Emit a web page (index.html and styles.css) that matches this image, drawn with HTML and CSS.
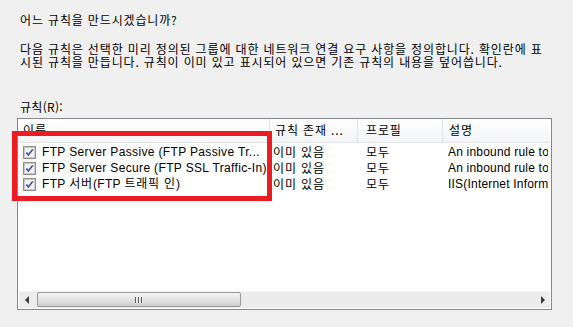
FILE: index.html
```html
<!DOCTYPE html>
<html lang="ko">
<head>
<meta charset="utf-8">
<link rel="stylesheet" href="styles.css">
</head>
<body>
<div class="page">
  <div class="title">어느 규칙을 만드시겠습니까?</div>
  <div class="desc">
    <div class="line">다음 규칙은 선택한 미리 정의된 그룹에 대한 네트워크 연결 요구 사항을 정의합니다. 확인란에 표</div>
    <div class="line">시된 규칙을 만듭니다. 규칙이 이미 있고 표시되어 있으면 기존 규칙의 내용을 덮어씁니다.</div>
  </div>
  <div class="label">규칙(R):</div>
  <div class="list">
    <div class="header">
      <div class="col c-name">이름</div>
      <div class="col c-exist">규칙 존재 ...</div>
      <div class="col c-prof">프로필</div>
      <div class="col c-desc">설명</div>
    </div>
    <div class="rows">
      <div class="row">
        <div class="cell c-name"><span class="cb"><svg width="13" height="13" viewBox="0 0 13 13"><rect x="0.5" y="0.5" width="12" height="12" fill="#dcdcdc" stroke="#8e8f8f"/><rect x="1.5" y="1.5" width="10" height="10" fill="#f4f4f4" stroke="#c8c8c8"/><path d="M3.3 6.6 L5.4 8.9 L9.8 3.2" fill="none" stroke="#3a53a4" stroke-width="1.6"/></svg></span><span class="txt">FTP Server Passive (FTP Passive Tr...</span></div>
        <div class="cell c-exist">이미 있음</div>
        <div class="cell c-prof">모두</div>
        <div class="cell c-desc">An inbound rule to allow</div>
      </div>
      <div class="row">
        <div class="cell c-name"><span class="cb"><svg width="13" height="13" viewBox="0 0 13 13"><rect x="0.5" y="0.5" width="12" height="12" fill="#dcdcdc" stroke="#8e8f8f"/><rect x="1.5" y="1.5" width="10" height="10" fill="#f4f4f4" stroke="#c8c8c8"/><path d="M3.3 6.6 L5.4 8.9 L9.8 3.2" fill="none" stroke="#3a53a4" stroke-width="1.6"/></svg></span><span class="txt">FTP Server Secure (FTP SSL Traffic-In)</span></div>
        <div class="cell c-exist">이미 있음</div>
        <div class="cell c-prof">모두</div>
        <div class="cell c-desc">An inbound rule to allow</div>
      </div>
      <div class="row">
        <div class="cell c-name"><span class="cb"><svg width="13" height="13" viewBox="0 0 13 13"><rect x="0.5" y="0.5" width="12" height="12" fill="#dcdcdc" stroke="#8e8f8f"/><rect x="1.5" y="1.5" width="10" height="10" fill="#f4f4f4" stroke="#c8c8c8"/><path d="M3.3 6.6 L5.4 8.9 L9.8 3.2" fill="none" stroke="#3a53a4" stroke-width="1.6"/></svg></span><span class="txt">FTP <span class="ko">서버</span>(FTP <span class="ko">트래픽 인</span>)</span></div>
        <div class="cell c-exist">이미 있음</div>
        <div class="cell c-prof">모두</div>
        <div class="cell c-desc">IIS(Internet Information Services)</div>
      </div>
    </div>
    <div class="hscroll">
      <div class="arrow"><svg width="5" height="8" viewBox="0 0 5 8"><path d="M4 0 L0 4 L4 8 Z" fill="#3c3c3c"/></svg></div>
      <div class="track">
        <div class="thumb"><span class="grip"></span><span class="grip"></span><span class="grip"></span></div>
      </div>
      <div class="arrow"><svg width="5" height="8" viewBox="0 0 5 8"><path d="M1 0 L5 4 L1 8 Z" fill="#3c3c3c"/></svg></div>
    </div>
    <div class="highlight"></div>
  </div>
</div>
</body>
</html>
```
FILE: styles.css
```css
html, body {
  margin: 0;
  padding: 0;
  background: #f0f0f0;
}
body {
  width: 573px;
  height: 327px;
  overflow: hidden;
  font-family: "Noto Sans CJK KR", "Liberation Sans", sans-serif;
  font-size: 12px;
  letter-spacing: 0.85px;
  color: #000;
}
.page {
  padding: 12px 21px 0 17px;
}
.title {
  margin-left: 3px;
  line-height: 16px;
  white-space: nowrap;
}
.desc {
  margin: 14px 0 0 3px;
}
.line {
  line-height: 13px;
  white-space: nowrap;
}
.label {
  margin: 32px 0 0 3px;
  line-height: 14px;
  letter-spacing: 0.3px;
}
.list {
  position: relative;
  margin-top: 4px;
  width: 533px;
  height: 190px;
  border: 1px solid #828790;
  background: #fff;
  display: flex;
  flex-direction: column;
}
.header {
  display: flex;
  height: 23px;
  border-bottom: 1px solid #e2e3e5;
  background: linear-gradient(#ffffff, #f3f4f6);
  margin-right: 1px;
}
.col {
  line-height: 22px;
  border-right: 1px solid #e2e3e5;
  box-sizing: border-box;
  white-space: nowrap;
  overflow: hidden;
}
.col.c-desc { border-right: none; flex: 1; }
.c-name { width: 252px; padding-left: 5px; box-sizing: border-box; }
.c-exist { width: 88px; padding-left: 5px; box-sizing: border-box; }
.c-prof { width: 85px; padding-left: 8px; box-sizing: border-box; }
.c-desc { flex: 1; padding-left: 6px; box-sizing: border-box; }
.rows {
  flex: 1;
  padding-top: 1px;
}
.row {
  display: flex;
  height: 16px;
  line-height: 16px;
  font-size: 12px;
}
.cell {
  white-space: nowrap;
  overflow: hidden;
}
.cell.c-name {
  padding-left: 5px;
  display: flex;
  align-items: center;
  font-family: "Liberation Sans", "Noto Sans CJK KR", sans-serif;
  font-size: 12px;
  letter-spacing: 0.35px;
}
.ko { letter-spacing: 0.8px; }
.cell.c-exist { padding-left: 3px; }
.cell.c-prof { padding-left: 8px; }
.cell.c-desc {
  padding-left: 5px;
  font-family: "Liberation Sans", sans-serif;
  font-size: 12px;
  letter-spacing: 0.2px;
  margin-right: 3px;
}
.cb {
  display: inline-flex;
  width: 13px;
  height: 13px;
  margin-right: 6px;
}
.hscroll {
  display: flex;
  height: 16px;
  background: #ececec;
  margin: 0 1px 1px 1px;
  border-top: 1px solid #f4f4f4;
}
.arrow {
  width: 16px;
  display: flex;
  align-items: center;
  justify-content: center;
}
.track {
  flex: 1;
  display: flex;
  padding-left: 2px;
}
.thumb {
  width: 204px;
  height: 15px;
  box-sizing: border-box;
  border: 1px solid #989898;
  border-radius: 2px;
  background: linear-gradient(#f4f4f4, #e3e3e3 50%, #d0d0d0);
  display: flex;
  align-items: center;
  justify-content: center;
  gap: 1px;
}
.grip {
  width: 1px;
  height: 6px;
  background: #5d5d5d;
  border-right: 1px solid #f0f0f0;
}
.highlight {
  position: absolute;
  left: -6px;
  top: 12px;
  width: 250px;
  height: 60px;
  border: 5px solid #ec1c24;
}
```
